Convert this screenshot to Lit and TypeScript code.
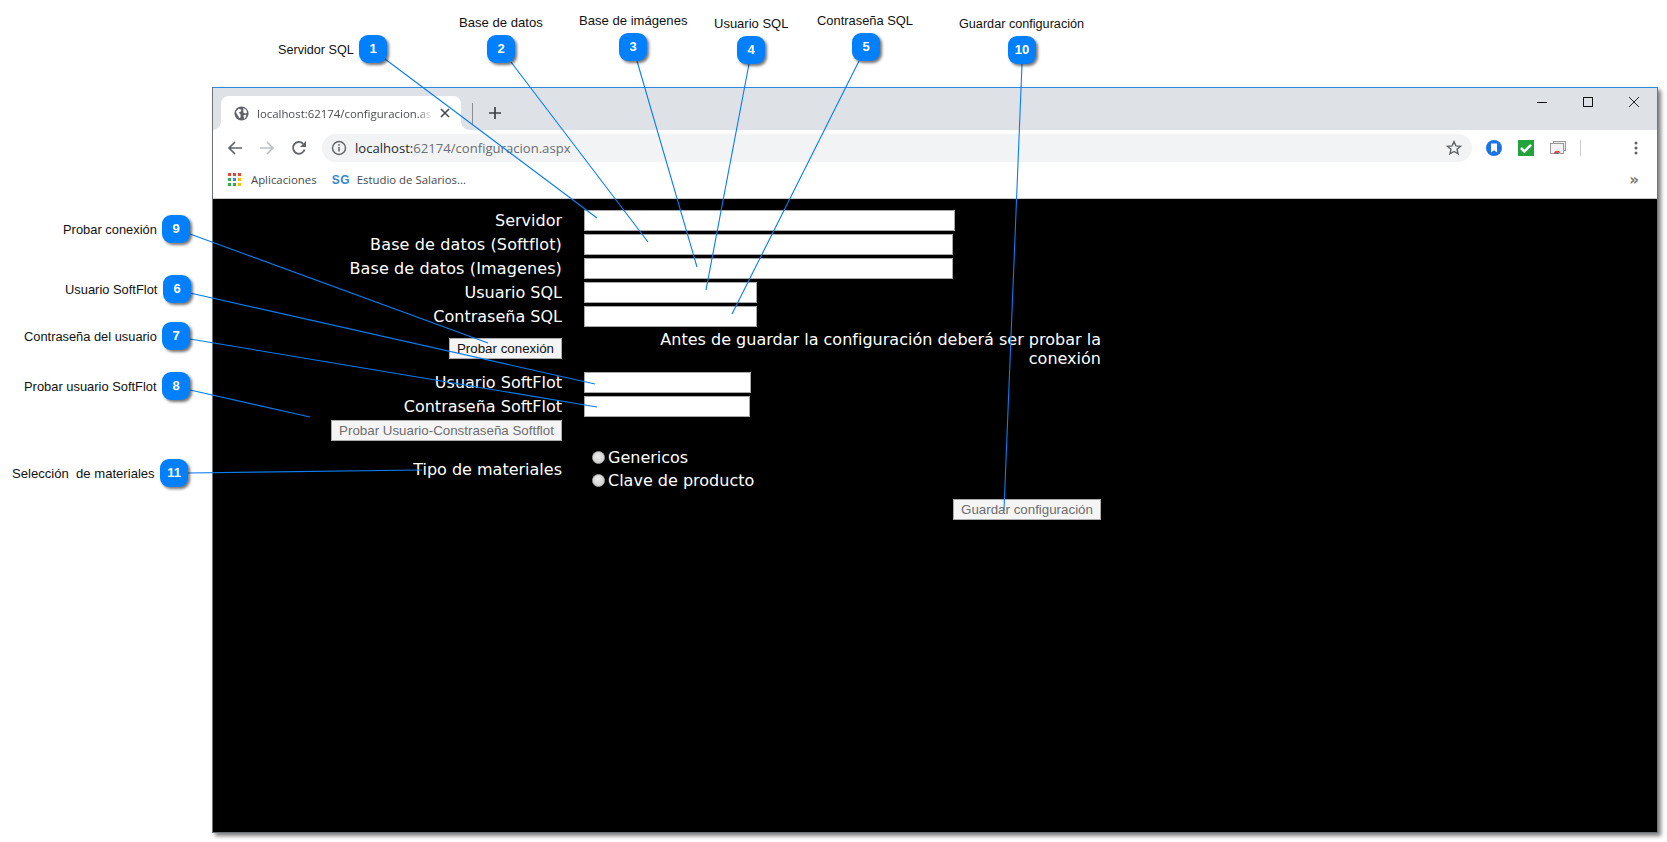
import { LitElement, html, css, svg } from "lit";
import { customElement } from "lit/decorators.js";

const LINES = [
  [385, 59, 597, 218], [511, 62, 648, 242], [637, 61, 697, 267], [749, 64, 706, 290],
  [859, 61, 732, 314], [1022, 64, 1004, 510], [190, 234, 488, 343], [190, 293, 595, 384],
  [190, 339, 597, 407], [190, 390, 310, 417], [188, 473, 422, 470],
];
const BADGES = [
  ["1", 373, 49], ["2", 501, 49], ["3", 633, 47], ["4", 751, 50], ["5", 866, 47], ["10", 1022, 50],
  ["9", 176, 229], ["6", 177, 289], ["7", 176, 336], ["8", 176, 386], ["11", 174, 473],
];
const TAGS = [
  ["Servidor SQL", 278, 50, 12.65], ["Base de datos", 459, 23, 13.1], ["Base de imágenes", 579, 21, 13.1], ["Usuario SQL", 714, 24, 13],
  ["Contraseña SQL", 817, 21, 12.9], ["Guardar configuración", 959, 24, 12.65], ["Probar conexión", 63, 230, 12.9], ["Usuario SoftFlot", 65, 290, 12.9],
  ["Contraseña del usuario", 24, 337, 12.85], ["Probar usuario SoftFlot", 24, 387, 12.9], ["Selección  de materiales", 12, 474, 13.1],
];
const APPS = ["#ea4335", "#ea4335", "#ea4335", "#34a853", "#4285f4", "#fbbc05", "#34a853", "#34a853", "#fbbc05"];

@customElement("app-root")
export class AppRoot extends LitElement {
  static styles = css`
    :host { display: block; position: relative; width: 1667px; height: 842px; overflow: hidden; background: #fff; box-sizing: border-box; padding: 87px 9px 9px 212px; }
    .win { height: 100%; box-sizing: border-box; display: flex; flex-direction: column; border: 1px solid #6f7478; border-top-color: #2a8be0; box-shadow: 3px 3px 4px rgba(0,0,0,.5); background: #000; }
    .strip { height: 42px; flex: none; display: flex; background: #dee1e6; }
    .tab { position: relative; margin: 8px 0 0 8px; width: 240px; height: 34px; box-sizing: border-box; padding-left: 13px; display: flex; align-items: center; background: #fff; border-radius: 8px 8px 0 0; }
    .tab::before, .tab::after { content: ""; position: absolute; bottom: 0; width: 8px; height: 8px; }
    .tab::before { left: -8px; background: radial-gradient(circle at 0 0, #dee1e6 7.5px, #fff 8px); }
    .tab::after { right: -8px; background: radial-gradient(circle at 100% 0, #dee1e6 7.5px, #fff 8px); }
    .title { margin-left: 8px; width: 175px; overflow: hidden; white-space: nowrap; font: 11.4px "Open Sans", sans-serif; color: #4a4d50; -webkit-mask-image: linear-gradient(90deg, #000 92%, transparent); mask-image: linear-gradient(90deg, #000 92%, transparent); }
    .tabx { margin-left: 8px; display: flex; }
    .sep { margin: 15px 0 0 11px; width: 1px; height: 21px; background: #8a8d91; }
    .plus { margin: 19px 0 0 16px; display: flex; align-self: flex-start; }
    .ctl { margin-left: auto; display: flex; }
    .ctl span { width: 46px; height: 20px; margin-top: 4px; display: flex; align-items: center; justify-content: center; }
    .tools { height: 43px; flex: none; box-sizing: border-box; display: flex; align-items: center; background: #fff; padding: 0 9.5px 7px 6px; }
    .nav { width: 32px; display: flex; justify-content: center; }
    .omni { margin-left: 7px; width: 1150px; height: 28px; box-sizing: border-box; padding: 0 10px 0 9px; display: flex; align-items: center; background: #f1f3f4; border-radius: 14px; }
    .url { margin-left: 8px; font: 13.1px "Open Sans", sans-serif; color: #6b6e72; }
    .url b { font-weight: 400; color: #26282b; }
    .star { margin-left: auto; display: flex; }
    .ext { width: 24px; display: flex; justify-content: center; }
    .ext + .ext { margin-left: 8px; }
    .ext.first { margin-left: 10px; }
    .vbar { margin-left: 10px; width: 1px; height: 16px; background: #c8cacc; }
    .menu { margin-left: auto; width: 24px; display: flex; justify-content: center; }
    .marks { height: 26px; flex: none; box-sizing: border-box; display: flex; align-items: center; background: #fff; border-bottom: 1px solid #c9c9c9; padding: 0 18px 12px 15px; font: 11.4px "Open Sans", sans-serif; color: #46494d; }
    .apps { display: grid; grid-template-columns: repeat(3, 3.4px); gap: 1.4px; }
    .apps i { display: block; width: 3.4px; height: 3.4px; }
    .aplic { margin-left: 10px; }
    .sg { margin-left: 15px; width: 17px; font: 700 12px "Liberation Sans", sans-serif; color: #3a87c8; letter-spacing: .5px; }
    .est { margin-left: 8px; }
    .more { margin-left: auto; font: 700 15px "DejaVu Sans", sans-serif; color: #777; }
    .page { flex: 1; background: #000; padding-top: 11px; color: #fff; font: 16px "DejaVu Sans", Verdana, sans-serif; }
    .form { display: grid; grid-template-columns: 349px 517px; column-gap: 22px; row-gap: 3px; }
    .lab { text-align: right; line-height: 21px; white-space: nowrap; }
    .lab.wide { letter-spacing: .13px; }
    input.t { display: block; box-sizing: border-box; height: 21px; padding: 0; background: #fff; border: 1px solid #a9a9a9; }
    .w371 { width: 371px; } .w369 { width: 369px; } .w173 { width: 173px; } .w167 { width: 167px; } .w166 { width: 166px; }
    .note { width: 460px; margin-left: auto; text-align: right; line-height: 19px; height: 39px; letter-spacing: .01px; }
    .btn { display: block; box-sizing: border-box; height: 21px; padding: 0; background: #f5f5f5; border: 1px solid #ababab; font: 13.33px "Liberation Sans", sans-serif; color: #6d6d6d; }
    .btn.on { color: #111; }
    .right { justify-self: end; }
    .b1 { width: 113px; margin-top: 8px; } .b2 { width: 231px; } .b3 { width: 148px; margin-top: 2px; }
    .lab.mid { align-self: center; }
    .radios { height: 50px; box-sizing: border-box; padding: 2px 0 0 8px; }
    .radios label { display: flex; align-items: center; height: 23px; line-height: 23px; gap: 3px; }
    .radios input { appearance: none; margin: 0; width: 13px; height: 13px; border-radius: 50%; background: radial-gradient(circle at 45% 40%, #ececec, #c8c8c8); border: 1px solid #a8a8a8; box-sizing: border-box; }
    .wires { position: absolute; inset: 0; width: 1667px; height: 842px; pointer-events: none; }
    .badge { position: absolute; width: 28px; height: 28px; margin: -14px 0 0 -14px; border-radius: 9px; background: #0080ff; box-shadow: 2px 2px 3px rgba(0,0,0,.55); color: #fff; font: 700 13px/28px "Liberation Sans", sans-serif; text-align: center; }
    .tag { position: absolute; margin-top: -9px; height: 18px; white-space: pre; font-family: "Liberation Sans", sans-serif; line-height: 18px; color: #111; }
  `;

  render() {
    return html`
      <div class="win">
        <div class="strip">
          <div class="tab">
            <svg width="15" height="15" viewBox="0 0 16 16"><circle cx="8" cy="8" r="7.5" fill="#5f6368"/><path d="M2 6l3-3 3 1-1 2-2 1 2 2v3l-1 1-2-3zM10 2l3 2 1 3-2 1-2-1zM10 10l3-1 0 2-2 3z" fill="#fff"/></svg>
            <span class="title">localhost:62174/configuracion.aspx</span>
            <span class="tabx"><svg width="10" height="10" viewBox="0 0 10 10"><path d="M1 1l8 8M9 1l-8 8" stroke="#45484c" stroke-width="1.6"/></svg></span>
          </div>
          <div class="sep"></div>
          <div class="plus"><svg width="12" height="12" viewBox="0 0 12 12"><path d="M6 0v12M0 6h12" stroke="#3c4043" stroke-width="1.7"/></svg></div>
          <div class="ctl">
            <span><svg width="10" height="10" viewBox="0 0 10 10"><path d="M0 5.500h10" stroke="#111"/></svg></span>
            <span><svg width="10" height="10" viewBox="0 0 10 10"><rect x=".5" y=".5" width="9" height="9" fill="none" stroke="#111"/></svg></span>
            <span><svg width="10" height="10" viewBox="0 0 10 10"><path d="M0 0l10 10M10 0L0 10" stroke="#111" stroke-width=".9"/></svg></span>
          </div>
        </div>
        <div class="tools">
          <span class="nav"><svg width="16" height="16" viewBox="0 0 16 16"><path d="M15 8H2M8 2L2 8l6 6" fill="none" stroke="#5f6368" stroke-width="1.7"/></svg></span>
          <span class="nav"><svg width="16" height="16" viewBox="0 0 16 16"><path d="M1 8h13M8 2l6 6-6 6" fill="none" stroke="#bdc1c6" stroke-width="1.7"/></svg></span>
          <span class="nav"><svg width="16" height="16" viewBox="0 0 16 16"><path d="M13.600 9.500A5.900 5.900 0 1 1 12.200 3.800" fill="none" stroke="#5f6368" stroke-width="1.8"/><path d="M15 1v6h-6z" fill="#5f6368"/></svg></span>
          <div class="omni">
            <svg width="16" height="16" viewBox="0 0 16 16"><circle cx="8" cy="8" r="6.500" fill="none" stroke="#5f6368" stroke-width="1.4"/><path d="M8 7v4.400" stroke="#5f6368" stroke-width="1.5"/><circle cx="8" cy="4.900" r=".9" fill="#5f6368"/></svg>
            <span class="url"><b>localhost:</b>62174/configuracion.aspx</span>
            <span class="star"><svg width="16" height="16" viewBox="0 0 16 16"><path d="M8 1.600l1.900 4.300 4.600.4-3.500 3 1.100 4.600L8 11.500l-4.100 2.400L5 9.300l-3.500-3 4.600-.4z" fill="none" stroke="#5f6368" stroke-width="1.4"/></svg></span>
          </div>
          <span class="ext first"><svg width="16" height="16" viewBox="0 0 16 16"><circle cx="8" cy="8" r="8" fill="#1a73e8"/><path d="M5 3.500h6v9l-3-2.200-3 2.200z" fill="#fff"/></svg></span>
          <span class="ext"><svg width="16" height="16" viewBox="0 0 16 16"><rect width="16" height="16" fill="#23a33c"/><path d="M3 8l3.400 3.400L13 4.800" fill="none" stroke="#fff" stroke-width="2.6"/></svg></span>
          <span class="ext"><svg width="16" height="14" viewBox="0 0 16 14"><rect x="3.500" y=".5" width="12" height="9" fill="#eee" stroke="#9a9a9a"/><rect x=".5" y="2.500" width="13" height="10" fill="#f4f4f4" stroke="#9a9a9a"/><path d="M4 13a3.200 3.200 0 0 1 6.400 0z" fill="#e0463a"/><path d="M5.500 13a1.700 1.700 0 0 1 3.400 0z" fill="#3a7de8"/><path d="M8.500 10.500l1.900 2.500H8.800z" fill="#f5c02c"/></svg></span>
          <span class="vbar"></span>
          <span class="menu"><svg width="4" height="14" viewBox="0 0 4 14"><circle cx="2" cy="2" r="1.500" fill="#5f6368"/><circle cx="2" cy="7" r="1.500" fill="#5f6368"/><circle cx="2" cy="12" r="1.500" fill="#5f6368"/></svg></span>
        </div>
        <div class="marks">
          <span class="apps">${APPS.map((c) => html`<i style="background:${c}"></i>`)}</span>
          <span class="aplic">Aplicaciones</span>
          <span class="sg">SG</span>
          <span class="est">Estudio de Salarios...</span>
          <span class="more">»</span>
        </div>
        <div class="page">
          <div class="form">
            <div class="lab">Servidor</div><input class="t w371" />
            <div class="lab wide">Base de datos (Softflot)</div><input class="t w369" />
            <div class="lab wide">Base de datos (Imagenes)</div><input class="t w369" />
            <div class="lab">Usuario SQL</div><input class="t w173" />
            <div class="lab">Contraseña SQL</div><input class="t w173" />
            <button class="btn on b1 right">Probar conexión</button>
            <div class="note">Antes de guardar la configuración deberá ser probar la conexión</div>
            <div class="lab">Usuario SoftFlot</div><input class="t w167" />
            <div class="lab">Contraseña SoftFlot</div><input class="t w166" />
            <button class="btn b2 right">Probar Usuario-Constraseña Softflot</button><div></div>
            <div class="lab mid">Tipo de materiales</div>
            <div class="radios">
              <label><input type="radio" name="m" />Genericos</label>
              <label><input type="radio" name="m" />Clave de producto</label>
            </div>
            <div></div><button class="btn b3 right">Guardar configuración</button>
          </div>
        </div>
      </div>
      <svg class="wires" viewBox="0 0 1667 842">
        ${LINES.map(([a, b, c, d]) => svg`<line x1=${a} y1=${b} x2=${c} y2=${d} stroke="#0a7df0" stroke-width="1.1"/>`)}
      </svg>
      ${TAGS.map(([t, x, y, s]) => html`<span class="tag" style="left:${x}px;top:${y}px;font-size:${s}px">${t}</span>`)}
      ${BADGES.map(([t, x, y]) => html`<span class="badge" style="left:${x}px;top:${y}px">${t}</span>`)}
    `;
  }
}
